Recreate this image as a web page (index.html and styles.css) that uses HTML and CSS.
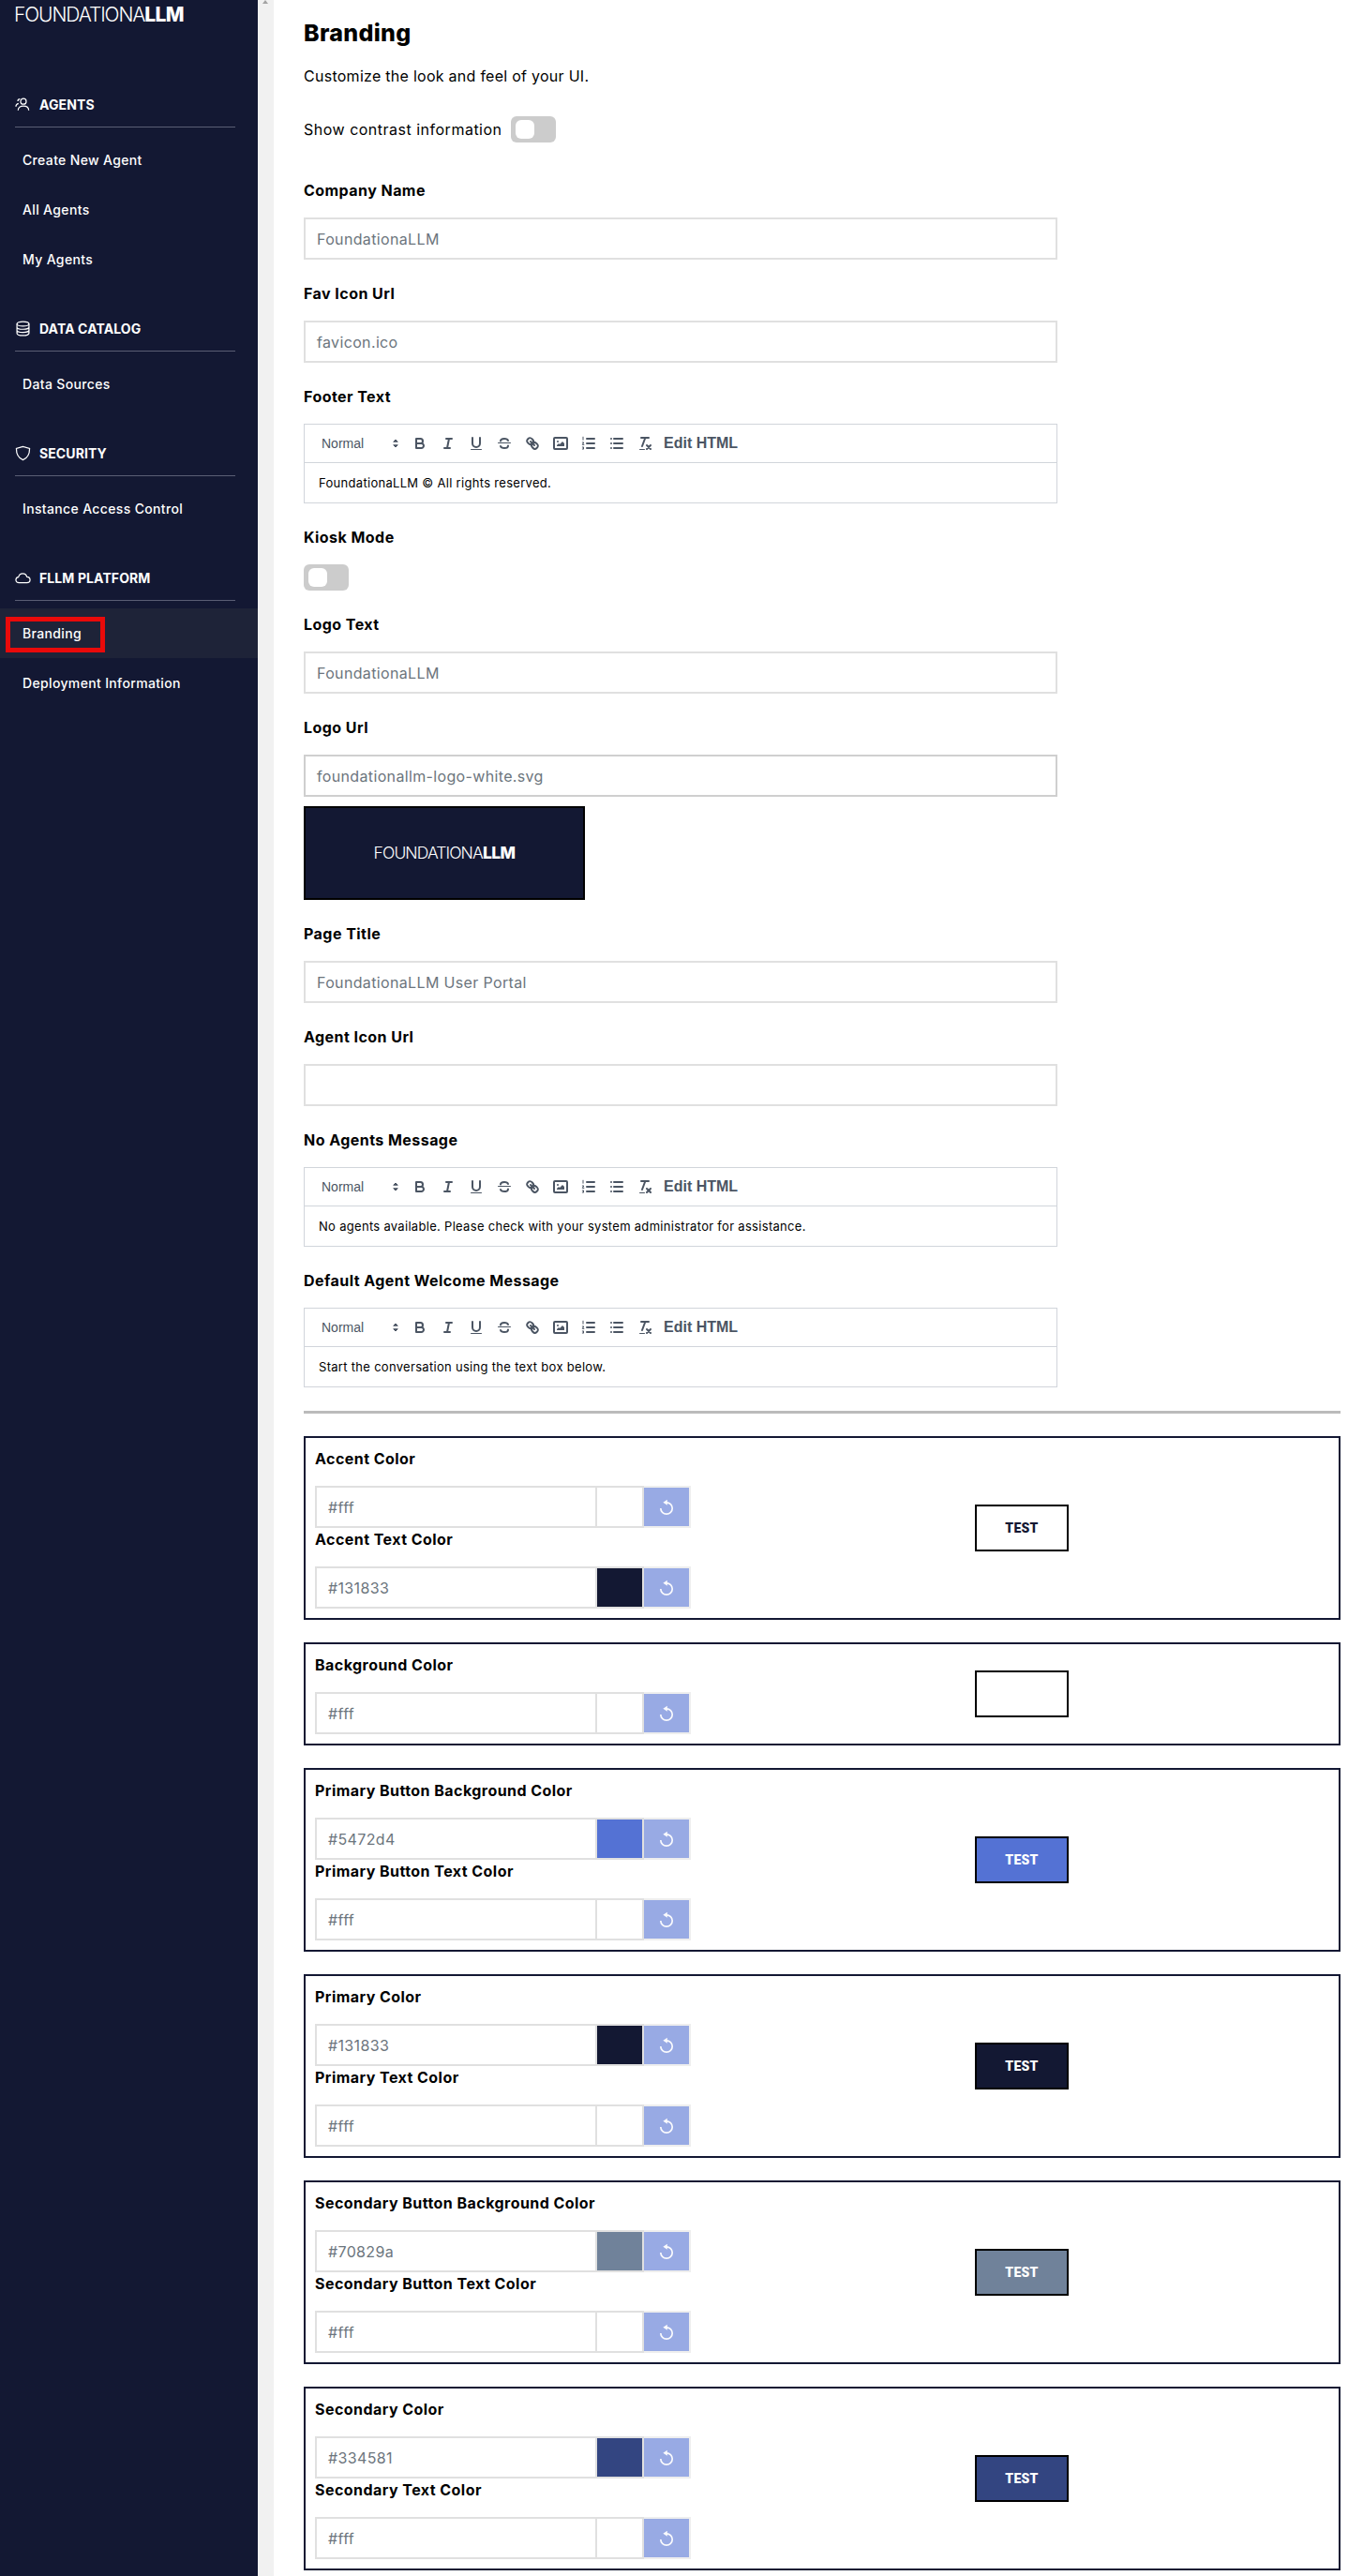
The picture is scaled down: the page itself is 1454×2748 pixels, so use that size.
FILE: index.html
```html
<!DOCTYPE html>
<html lang="en">
<head>
<meta charset="utf-8">
<title>Branding</title>
<link rel="stylesheet" href="styles.css">
</head>
<body>
<svg class="defs" width="0" height="0" aria-hidden="true">
  <symbol id="q-bold" viewBox="0 0 18 18"><path d="M5,4H9.500A2.500,2.500,0,0,1,12,6.500v0A2.500,2.500,0,0,1,9.500,9H5V4Z"/><path d="M5,9h5.500A2.500,2.500,0,0,1,13,11.500v0A2.500,2.500,0,0,1,10.500,14H5V9Z"/></symbol>
  <symbol id="q-italic" viewBox="0 0 18 18"><path d="M7 4h6M5 14h6M8 14l2-10"/></symbol>
  <symbol id="q-underline" viewBox="0 0 18 18"><path d="M5,3V9a4,4,0,0,0,4,4h0a4,4,0,0,0,4-4V3"/><rect class="solid" x="3" y="15" width="12" height="1" rx=".5"/></symbol>
  <symbol id="q-strike" viewBox="0 0 18 18"><path class="thin" d="M2.500 8.500h13"/><path d="M13 6c-.4-1.300-2-2-4-2-2.400 0-4 1-4 2.500M5 12c.4 1.300 2 2 4 2 2.400 0 4-1 4-2.500"/></symbol>
  <symbol id="q-link" viewBox="0 0 18 18"><path d="M7 7l4 4"/><path d="M8.900,4.577a3.476,3.476,0,0,1,.36,4.679A3.476,3.476,0,0,1,4.577,8.900C3.185,7.500,2.035,6.400,4.217,4.217S7.500,3.185,8.900,4.577Z"/><path d="M13.423,9.100a3.476,3.476,0,0,0-4.679-.36,3.476,3.476,0,0,0,.36,4.679c1.392,1.392,2.500,2.542,4.679.36S14.815,10.500,13.423,9.100Z"/></symbol>
  <symbol id="q-image" viewBox="0 0 18 18"><rect x="2" y="3" width="14" height="12" rx="1"/><circle class="solid" cx="6" cy="7" r="1"/><polygon class="solid" points="5 12 5 11 7 9 8 10 11 7 13 9 13 12"/></symbol>
  <symbol id="q-ol" viewBox="0 0 18 18"><path d="M7 4h8M7 9h8M7 14h8"/><path class="thin" d="M3 2.200v3M2.300 8h1.500l-1.500 2.400h1.600M2.300 13h1.500l-.6 1 .6 1h-1.500"/></symbol>
  <symbol id="q-ul" viewBox="0 0 18 18"><path d="M6 4h9M6 9h9M6 14h9M3 4h0M3 9h0M3 14h0"/></symbol>
  <symbol id="q-clean" viewBox="0 0 18 18"><path d="M5 3h8M6 12l3.350-9M11 11l4 4M15 11l-4 4"/><rect class="solid" x="3" y="15" width="6" height="1" rx=".5"/></symbol>
  <symbol id="q-arrows" viewBox="0 0 18 18"><polygon class="solid-s" points="7 11 9 13 11 11"/><polygon class="solid-s" points="7 7 9 5 11 7"/></symbol>
  <symbol id="i-reset" viewBox="0 0 18 18"><path d="M9 3.800A6.200 6.200 0 1 1 2.800 10"/><path class="solid-w" d="M9.800.8 5.300 3.800l4.500 3z"/></symbol>
</svg>

<aside class="sidebar">
  <div class="logo"><span class="logo-thin">FOUNDATIONA</span><b>LLM</b></div>

  <div class="nav-head nav-head-first">
    <svg class="nav-icon" viewBox="0 0 18 18"><circle cx="9.500" cy="5.500" r="3.200"/><path d="M3.500 15.500c0-3 2.600-4.800 6-4.800s6 1.800 6 4.800M1 11.500c0-2 1.300-3.300 3-3.700M5.700 2.800C4.200 2.800 3.200 3.900 3.200 5.200"/></svg>
    <span>AGENTS</span>
  </div>
  <a class="nav-item">Create New Agent</a>
  <a class="nav-item">All Agents</a>
  <a class="nav-item">My Agents</a>

  <div class="nav-head">
    <svg class="nav-icon" viewBox="0 0 18 18"><ellipse cx="9" cy="3.700" rx="6.800" ry="2.600"/><path d="M2.200 3.700v10.600c0 1.500 3 2.600 6.800 2.600s6.800-1.100 6.800-2.600V3.700M2.200 7.300c0 1.400 3 2.500 6.800 2.500s6.800-1.100 6.800-2.500M2.200 10.800c0 1.400 3 2.500 6.800 2.500s6.800-1.100 6.800-2.500"/></svg>
    <span>DATA CATALOG</span>
  </div>
  <a class="nav-item">Data Sources</a>

  <div class="nav-head">
    <svg class="nav-icon" viewBox="0 0 18 18"><path d="M9 1.500 1.500 3.700c0 6.300 1.800 10.500 7.500 12.800 5.700-2.300 7.500-6.500 7.500-12.800z"/></svg>
    <span>SECURITY</span>
  </div>
  <a class="nav-item">Instance Access Control</a>

  <div class="nav-head">
    <svg class="nav-icon" viewBox="0 0 18 18"><path d="M4.500 14.500C2.400 14.500 1 13 1 11.200c0-1.700 1.200-3 2.900-3.200C4.500 5.700 6.300 4 8.700 4c2.300 0 4.200 1.500 4.700 3.700 2.100.1 3.600 1.600 3.600 3.500 0 1.900-1.500 3.300-3.500 3.300z"/></svg>
    <span>FLLM PLATFORM</span>
  </div>
  <a class="nav-item nav-item-active">Branding</a>
  <a class="nav-item">Deployment Information</a>
</aside>

<div class="scroll-strip"><span class="scroll-arrow"></span></div>

<main class="main">
  <h1 class="title">Branding</h1>
  <p class="lead">Customize the look and feel of your UI.</p>
  <div class="contrast"><span>Show contrast information</span><span class="toggle"></span></div>

  <section class="field field-first">
    <div class="label">Company Name</div>
    <div class="input">FoundationaLLM</div>
  </section>
  <section class="field">
    <div class="label">Fav Icon Url</div>
    <div class="input">favicon.ico</div>
  </section>
  <section class="field">
    <div class="label">Footer Text</div>
    <div class="editor">
      <div class="toolbar">
        <span class="picker">Normal</span><svg class="q q-arrow"><use href="#q-arrows"/></svg>
        <svg class="q"><use href="#q-bold"/></svg><svg class="q"><use href="#q-italic"/></svg><svg class="q"><use href="#q-underline"/></svg><svg class="q"><use href="#q-strike"/></svg><svg class="q"><use href="#q-link"/></svg><svg class="q"><use href="#q-image"/></svg><svg class="q"><use href="#q-ol"/></svg><svg class="q"><use href="#q-ul"/></svg><svg class="q"><use href="#q-clean"/></svg>
        <span class="edit-html">Edit HTML</span>
      </div>
      <div class="editor-body">FoundationaLLM © All rights reserved.</div>
    </div>
  </section>
  <section class="field">
    <div class="label">Kiosk Mode</div>
    <span class="toggle"></span>
  </section>
  <section class="field">
    <div class="label">Logo Text</div>
    <div class="input">FoundationaLLM</div>
  </section>
  <section class="field">
    <div class="label">Logo Url</div>
    <div class="input input-dark">foundationallm-logo-white.svg</div>
    <div class="logo-box"><div class="logo logo-small"><span class="logo-thin">FOUNDATIONA</span><b>LLM</b></div></div>
  </section>
  <section class="field">
    <div class="label">Page Title</div>
    <div class="input">FoundationaLLM User Portal</div>
  </section>
  <section class="field">
    <div class="label">Agent Icon Url</div>
    <div class="input"></div>
  </section>
  <section class="field">
    <div class="label">No Agents Message</div>
    <div class="editor">
      <div class="toolbar">
        <span class="picker">Normal</span><svg class="q q-arrow"><use href="#q-arrows"/></svg>
        <svg class="q"><use href="#q-bold"/></svg><svg class="q"><use href="#q-italic"/></svg><svg class="q"><use href="#q-underline"/></svg><svg class="q"><use href="#q-strike"/></svg><svg class="q"><use href="#q-link"/></svg><svg class="q"><use href="#q-image"/></svg><svg class="q"><use href="#q-ol"/></svg><svg class="q"><use href="#q-ul"/></svg><svg class="q"><use href="#q-clean"/></svg>
        <span class="edit-html">Edit HTML</span>
      </div>
      <div class="editor-body">No agents available. Please check with your system administrator for assistance.</div>
    </div>
  </section>
  <section class="field">
    <div class="label">Default Agent Welcome Message</div>
    <div class="editor">
      <div class="toolbar">
        <span class="picker">Normal</span><svg class="q q-arrow"><use href="#q-arrows"/></svg>
        <svg class="q"><use href="#q-bold"/></svg><svg class="q"><use href="#q-italic"/></svg><svg class="q"><use href="#q-underline"/></svg><svg class="q"><use href="#q-strike"/></svg><svg class="q"><use href="#q-link"/></svg><svg class="q"><use href="#q-image"/></svg><svg class="q"><use href="#q-ol"/></svg><svg class="q"><use href="#q-ul"/></svg><svg class="q"><use href="#q-clean"/></svg>
        <span class="edit-html">Edit HTML</span>
      </div>
      <div class="editor-body">Start the conversation using the text box below.</div>
    </div>
  </section>

  <hr class="divider">

  <section class="card">
    <div class="card-col">
      <div class="c-label">Accent Color</div>
      <div class="c-row"><div class="c-input">#fff</div><div class="c-swatch swatch-fff"></div><div class="c-reset"><svg class="r"><use href="#i-reset"/></svg></div></div>
      <div class="c-label">Accent Text Color</div>
      <div class="c-row"><div class="c-input">#131833</div><div class="c-swatch swatch-131833"></div><div class="c-reset"><svg class="r"><use href="#i-reset"/></svg></div></div>
    </div>
    <div class="test test-accent">TEST</div>
  </section>

  <section class="card">
    <div class="card-col">
      <div class="c-label">Background Color</div>
      <div class="c-row"><div class="c-input">#fff</div><div class="c-swatch swatch-fff"></div><div class="c-reset"><svg class="r"><use href="#i-reset"/></svg></div></div>
    </div>
    <div class="test test-bg"></div>
  </section>

  <section class="card">
    <div class="card-col">
      <div class="c-label">Primary Button Background Color</div>
      <div class="c-row"><div class="c-input">#5472d4</div><div class="c-swatch swatch-5472d4"></div><div class="c-reset"><svg class="r"><use href="#i-reset"/></svg></div></div>
      <div class="c-label">Primary Button Text Color</div>
      <div class="c-row"><div class="c-input">#fff</div><div class="c-swatch swatch-fff"></div><div class="c-reset"><svg class="r"><use href="#i-reset"/></svg></div></div>
    </div>
    <div class="test test-primary-btn">TEST</div>
  </section>

  <section class="card">
    <div class="card-col">
      <div class="c-label">Primary Color</div>
      <div class="c-row"><div class="c-input">#131833</div><div class="c-swatch swatch-131833"></div><div class="c-reset"><svg class="r"><use href="#i-reset"/></svg></div></div>
      <div class="c-label">Primary Text Color</div>
      <div class="c-row"><div class="c-input">#fff</div><div class="c-swatch swatch-fff"></div><div class="c-reset"><svg class="r"><use href="#i-reset"/></svg></div></div>
    </div>
    <div class="test test-primary">TEST</div>
  </section>

  <section class="card">
    <div class="card-col">
      <div class="c-label">Secondary Button Background Color</div>
      <div class="c-row"><div class="c-input">#70829a</div><div class="c-swatch swatch-70829a"></div><div class="c-reset"><svg class="r"><use href="#i-reset"/></svg></div></div>
      <div class="c-label">Secondary Button Text Color</div>
      <div class="c-row"><div class="c-input">#fff</div><div class="c-swatch swatch-fff"></div><div class="c-reset"><svg class="r"><use href="#i-reset"/></svg></div></div>
    </div>
    <div class="test test-secondary-btn">TEST</div>
  </section>

  <section class="card">
    <div class="card-col">
      <div class="c-label">Secondary Color</div>
      <div class="c-row"><div class="c-input">#334581</div><div class="c-swatch swatch-334581"></div><div class="c-reset"><svg class="r"><use href="#i-reset"/></svg></div></div>
      <div class="c-label">Secondary Text Color</div>
      <div class="c-row"><div class="c-input">#fff</div><div class="c-swatch swatch-fff"></div><div class="c-reset"><svg class="r"><use href="#i-reset"/></svg></div></div>
    </div>
    <div class="test test-secondary">TEST</div>
  </section>
</main>
</body>
</html>
```
FILE: styles.css
```css
*, *::before, *::after { box-sizing: border-box; }
html, body { margin: 0; height: 2748px; overflow: hidden; }
body {
  display: flex;
  background: #fff;
  color: #000;
  font-family: Inter, "Open Sans", "Liberation Sans", sans-serif;
}
.defs { position: absolute; }

/* sidebar */
.sidebar {
  width: 275px;
  flex: none;
  background: #131833;
  color: #fff;
  padding-top: 7px;
}
.logo {
  margin-left: 15px;
  font-family: Inter, "Liberation Sans", sans-serif;
  font-size: 21px;
  line-height: 18px;
  letter-spacing: -1.1px;
  color: #fff;
  white-space: nowrap;
}
.logo-thin { font-weight: 300; }
.logo b { font-weight: 800; letter-spacing: -0.6px; }
.nav-head {
  margin: 22px 24px 0 16px;
  height: 50px;
  padding-top: 1px;
  border-bottom: 1px solid #5a5e74;
  display: flex;
  align-items: center;
  gap: 9px;
  font-size: 14px;
  font-weight: 700;
  letter-spacing: 0.1px;
}
.nav-head-first { margin-top: 61px; }
.nav-icon {
  width: 17px;
  height: 17px;
  fill: none;
  stroke: #fff;
  stroke-width: 1.300;
  flex: none;
}
.nav-item {
  display: flex;
  align-items: center;
  height: 53px;
  padding-left: 24px;
  font-size: 14px;
  font-weight: 500;
  letter-spacing: 0.35px;
  color: #fff;
}
.nav-head + .nav-item { margin-top: 8px; }
.nav-item-active { background: #1e2338; position: relative; }
.nav-item-active::after {
  content: "";
  position: absolute;
  left: 6px;
  top: 9px;
  width: 106px;
  height: 38px;
  border: 5px solid #e90a0a;
}
.scroll-strip {
  width: 17px;
  flex: none;
  background: #f1f1f1;
  position: relative;
}
.scroll-arrow {
  position: absolute;
  left: 5px;
  top: 0;
  border-left: 3.500px solid transparent;
  border-right: 3.500px solid transparent;
  border-bottom: 4px solid #a3a3a3;
}

/* main */
.main { flex: 1; padding: 0 24px 0 32px; min-width: 0; }
.title { margin: 18px 0 0; font-size: 25px; line-height: 34px; font-weight: 800; letter-spacing: 0.3px; }
.lead { margin: 17px 0 0; font-size: 16px; line-height: 24px; letter-spacing: 0.27px; }
.contrast { margin-top: 31px; display: flex; align-items: center; gap: 9px; font-size: 16px; line-height: 28px; letter-spacing: 0.5px; }
.toggle { display: block; width: 48px; height: 28px; border-radius: 6px; background: #ccc; position: relative; }
.toggle::after {
  content: "";
  position: absolute;
  left: 5px;
  top: 4px;
  width: 20px;
  height: 20px;
  border-radius: 6px;
  background: #fff;
}
.field { margin-top: 24px; width: 804px; }
.field-first { margin-top: 39px; }
.label { font-size: 16px; font-weight: 700; line-height: 24px; margin-bottom: 17px; letter-spacing: 0.45px; }
.input {
  height: 45px;
  border: 2px solid #e0e0e0;
  padding: 0 12px;
  display: flex;
  align-items: center;
  font-size: 16px;
  letter-spacing: 0.35px;
  color: #6c757d;
}
.input-dark { border-color: #cfcfcf; }
.logo-box {
  margin-top: 10px;
  width: 300px;
  height: 100px;
  border: 2px solid #000;
  background: #131833;
  display: flex;
  align-items: center;
  justify-content: center;
}
.logo-small { margin: 0; font-size: 17.500px; letter-spacing: -0.9px; }
.editor { border: 1px solid #d1d5db; }
.toolbar {
  height: 41px;
  border-bottom: 1px solid #d1d5db;
  padding-left: 18px;
  display: flex;
  align-items: center;
}
.picker { width: 70px; font-family: "Liberation Sans", Arial, sans-serif; font-size: 14px; font-weight: 500; color: #4b5563; }
.q {
  width: 18px;
  height: 18px;
  margin-right: 12px;
  fill: none;
  stroke: #4b5563;
  stroke-width: 2;
  stroke-linecap: round;
  stroke-linejoin: round;
  flex: none;
}
.q-arrow { margin-right: 8px; }
.solid { fill: #4b5563; stroke: none; }
.solid-s { fill: #4b5563; stroke: #4b5563; stroke-width: 1; }
.thin { stroke-width: 1; }
.edit-html { margin-left: -1px; font-family: "Liberation Sans", Arial, sans-serif; font-size: 16px; font-weight: 700; color: #4b5563; }
.editor-body { height: 42px; padding-left: 15px; display: flex; align-items: center; font-size: 13px; letter-spacing: 0.3px; }

.divider { margin: 25px 0 24px; height: 3px; border: 0; background: #bbb; }
.card {
  border: 2px solid #131833;
  margin-bottom: 24px;
  padding: 10px;
  display: flex;
  align-items: center;
}
.card-col { width: 704px; flex: none; }
.c-label { font-size: 16px; font-weight: 700; line-height: 24px; margin-bottom: 17px; letter-spacing: 0.45px; }
.c-row { width: 401px; height: 45px; display: flex; }
.c-input { width: 301px; border: 2px solid #e0e0e0; padding: 0 12px; display: flex; align-items: center; font-size: 16px; letter-spacing: 0.35px; color: #6c757d; }
.c-swatch { width: 50px; border: 2px solid #e0e0e0; border-left: 0; }
.swatch-fff { background: #fff; }
.swatch-131833 { background: #131833; }
.swatch-5472d4 { background: #5472d4; }
.swatch-70829a { background: #70829a; }
.swatch-334581 { background: #334581; }
.c-reset { width: 50px; background: #98aae4; border: 2px solid #eee; border-left: 0; display: flex; align-items: center; justify-content: center; }
.r { width: 18px; height: 18px; fill: none; stroke: #fff; stroke-width: 1.700; opacity: 0.95; }
.solid-w { fill: #fff; stroke: none; }
.test {
  width: 100px;
  height: 50px;
  border: 2px solid #000;
  display: flex;
  align-items: center;
  justify-content: center;
  font-family: Roboto, "Liberation Sans", sans-serif;
  font-size: 14px;
  font-weight: 900;
  letter-spacing: 0.3px;
}
.test-accent { background: #fff; color: #131833; }
.test-bg { background: #fff; }
.test-primary-btn { background: #5472d4; color: #fff; }
.test-primary { background: #131833; color: #fff; }
.test-secondary-btn { background: #70829a; color: #fff; }
.test-secondary { background: #334581; color: #fff; }
```
